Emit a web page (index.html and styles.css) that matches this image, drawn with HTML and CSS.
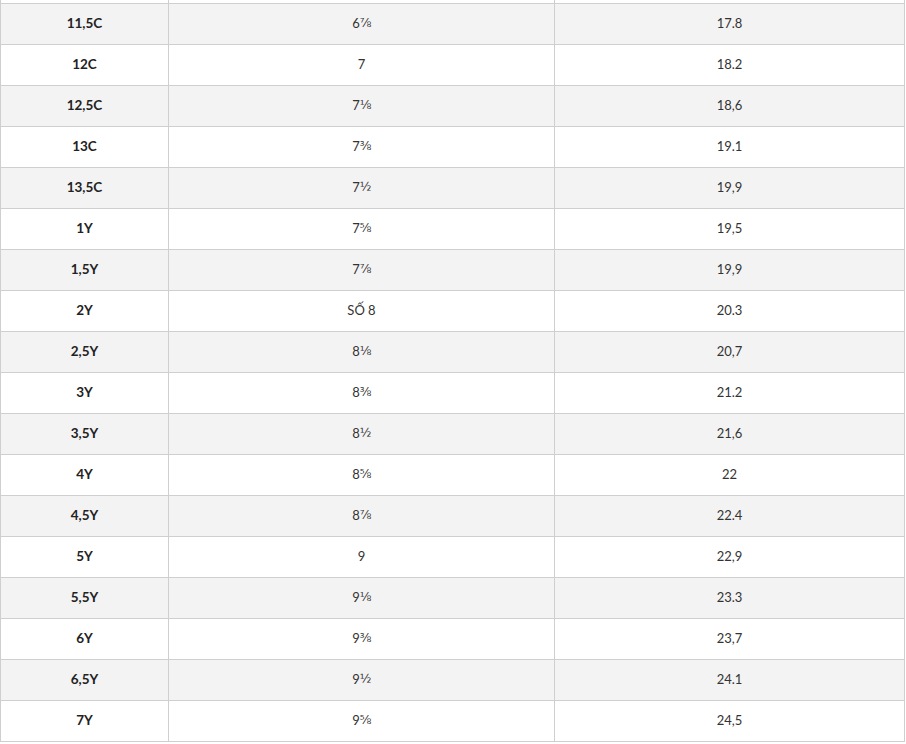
FILE: index.html
```html
<!DOCTYPE html>
<html lang="vi">
<head>
<meta charset="utf-8">
<title>Bảng kích cỡ</title>
<link rel="stylesheet" href="styles.css">
</head>
<body>
<div class="size-table">
  <div class="row"><div class="cell head"></div><div class="cell"></div><div class="cell"></div></div>
  <div class="row alt"><div class="cell head">11,5C</div><div class="cell">6<span class="frac">⅞</span></div><div class="cell">17.8</div></div>
  <div class="row"><div class="cell head">12C</div><div class="cell">7</div><div class="cell">18.2</div></div>
  <div class="row alt"><div class="cell head">12,5C</div><div class="cell">7<span class="frac">⅛</span></div><div class="cell">18,6</div></div>
  <div class="row"><div class="cell head">13C</div><div class="cell">7<span class="frac">⅜</span></div><div class="cell">19.1</div></div>
  <div class="row alt"><div class="cell head">13,5C</div><div class="cell">7<span class="frac">½</span></div><div class="cell">19,9</div></div>
  <div class="row"><div class="cell head">1Y</div><div class="cell">7<span class="frac">⅝</span></div><div class="cell">19,5</div></div>
  <div class="row alt"><div class="cell head">1,5Y</div><div class="cell">7<span class="frac">⅞</span></div><div class="cell">19,9</div></div>
  <div class="row"><div class="cell head">2Y</div><div class="cell">SỐ 8</div><div class="cell">20.3</div></div>
  <div class="row alt"><div class="cell head">2,5Y</div><div class="cell">8<span class="frac">⅛</span></div><div class="cell">20,7</div></div>
  <div class="row"><div class="cell head">3Y</div><div class="cell">8<span class="frac">⅜</span></div><div class="cell">21.2</div></div>
  <div class="row alt"><div class="cell head">3,5Y</div><div class="cell">8<span class="frac">½</span></div><div class="cell">21,6</div></div>
  <div class="row"><div class="cell head">4Y</div><div class="cell">8<span class="frac">⅝</span></div><div class="cell">22</div></div>
  <div class="row alt"><div class="cell head">4,5Y</div><div class="cell">8<span class="frac">⅞</span></div><div class="cell">22.4</div></div>
  <div class="row"><div class="cell head">5Y</div><div class="cell">9</div><div class="cell">22,9</div></div>
  <div class="row alt"><div class="cell head">5,5Y</div><div class="cell">9<span class="frac">⅛</span></div><div class="cell">23.3</div></div>
  <div class="row"><div class="cell head">6Y</div><div class="cell">9<span class="frac">⅜</span></div><div class="cell">23,7</div></div>
  <div class="row alt"><div class="cell head">6,5Y</div><div class="cell">9<span class="frac">½</span></div><div class="cell">24.1</div></div>
  <div class="row"><div class="cell head">7Y</div><div class="cell">9<span class="frac">⅝</span></div><div class="cell">24,5</div></div>
</div>
</body>
</html>
```
FILE: styles.css
```css
html, body {
  margin: 0;
  padding: 0;
  background: #ffffff;
}

body {
  font-family: Lato, "DejaVu Sans", sans-serif;
  font-size: 13px;
  color: #333333;
}

.size-table {
  width: 905px;
  box-sizing: border-box;
  margin-top: -38px;
  border-right: 1px solid #cfcfcf;
  border-bottom: 1px solid #cfcfcf;
}

.row {
  display: grid;
  grid-template-columns: 168px 386px 350px;
  background: #ffffff;
}

.row.alt {
  background: #f3f3f3;
}

.cell {
  box-sizing: border-box;
  height: 41px;
  border-top: 1px solid #cfcfcf;
  border-left: 1px solid #cfcfcf;
  display: flex;
  align-items: center;
  justify-content: center;
  padding-bottom: 3px;
}

.cell.head {
  font-weight: 700;
  color: #222222;
  font-size: 13.5px;
}

.frac {
  font-family: "DejaVu Sans", sans-serif;
  font-size: 12px;
  letter-spacing: -0.5px;
}
```
